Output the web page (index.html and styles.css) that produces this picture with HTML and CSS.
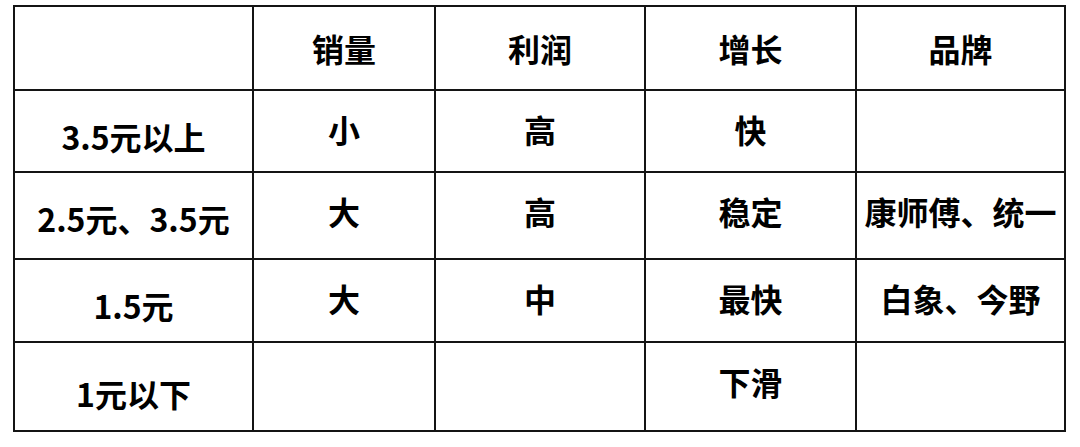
FILE: index.html
```html
<!DOCTYPE html>
<html lang="zh-CN">
<head>
<meta charset="utf-8">
<title>价格带</title>
<link rel="stylesheet" href="styles.css">
</head>
<body>
<div class="grid">
  <div class="cell head"></div>
  <div class="cell head">销量</div>
  <div class="cell head">利润</div>
  <div class="cell head">增长</div>
  <div class="cell head">品牌</div>

  <div class="cell side">3.5元以上</div>
  <div class="cell">小</div>
  <div class="cell">高</div>
  <div class="cell">快</div>
  <div class="cell"></div>

  <div class="cell side">2.5元、3.5元</div>
  <div class="cell">大</div>
  <div class="cell">高</div>
  <div class="cell">稳定</div>
  <div class="cell">康师傅、统一</div>

  <div class="cell side">1.5元</div>
  <div class="cell">大</div>
  <div class="cell">中</div>
  <div class="cell">最快</div>
  <div class="cell">白象、今野</div>

  <div class="cell side last">1元以下</div>
  <div class="cell"></div>
  <div class="cell"></div>
  <div class="cell">下滑</div>
  <div class="cell"></div>
</div>
</body>
</html>
```
FILE: styles.css
```css
html, body {
  margin: 0;
  padding: 0;
  background: #ffffff;
}
body {
  padding: 5px 0 0 13px;
  font-family: "Noto Sans CJK SC", "Noto Sans", sans-serif;
  font-weight: 700;
  color: #000;
}
.grid {
  display: grid;
  width: max-content;
  grid-template-columns: 237px 180px 208px 209px 207px;
  grid-template-rows: 82px 80px 85px 81px 87px;
  gap: 2px;
  padding: 2px;
  background: #141414;
}
.cell {
  background: #ffffff;
  text-align: center;
  font-size: 32px;
  line-height: 32px;
  padding-top: 22px;
  box-sizing: border-box;
  white-space: nowrap;
}
.cell.head {
  padding-top: 25px;
}
.cell.side {
  padding-top: 29px;
}
.cell.side.last {
  padding-top: 34px;
}
```
